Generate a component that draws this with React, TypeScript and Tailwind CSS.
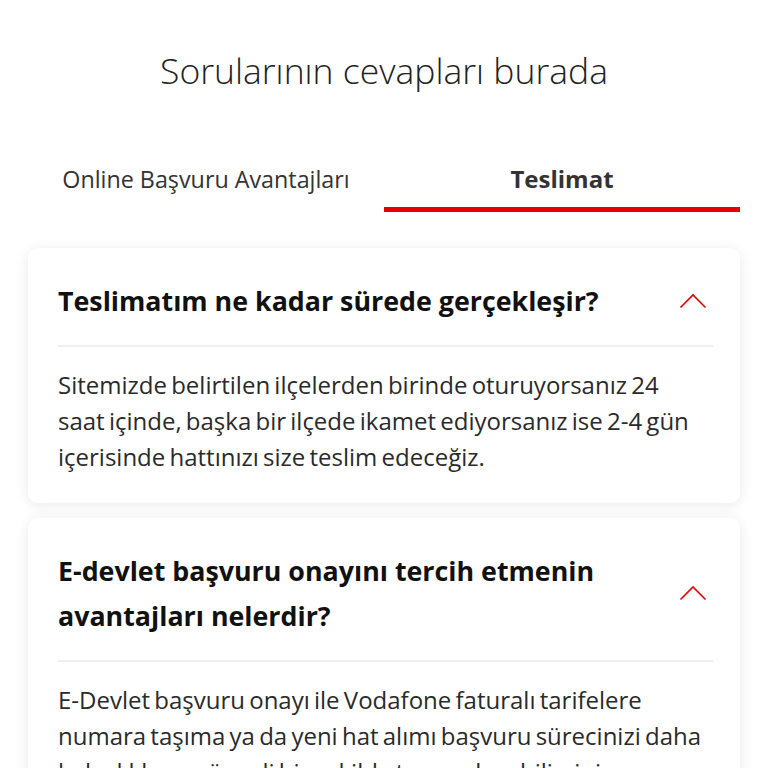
import React, { useState } from "react";

type Faq = { id: string; question: string; answer: string };

const tabs = ["Online Başvuru Avantajları", "Teslimat"];

const faqs: Faq[] = [
  {
    id: "sure",
    question: "Teslimatım ne kadar sürede gerçekleşir?",
    answer:
      "Sitemizde belirtilen ilçelerden birinde oturuyorsanız 24 saat içinde, başka bir ilçede ikamet ediyorsanız ise 2-4 gün içerisinde hattınızı size teslim edeceğiz.",
  },
  {
    id: "edevlet",
    question: "E-devlet başvuru onayını tercih etmenin avantajları nelerdir?",
    answer:
      "E-Devlet başvuru onayı ile Vodafone faturalı tarifelere numara taşıma ya da yeni hat alımı başvuru sürecinizi daha kolaylıkla ve güvenli bir şekilde tamamlayabilirsiniz.",
  },
];

const ChevronUp = () => (
  <svg width="28" height="16" viewBox="0 0 28 16" fill="none" className="shrink-0">
    <path d="M1.5 14.5 L14 2 L26.5 14.5" stroke="#e60000" strokeWidth="1.6" />
  </svg>
);

const FaqCard: React.FC<{ item: Faq }> = ({ item }) => (
  <div className="rounded-[10px] bg-white pl-[30px] pr-[27px] shadow-[0_2px_14px_rgba(0,0,0,0.09)]">
    <div className="flex items-center justify-between pt-[30px] pb-[22px]">
      <h3 className="max-w-[590px] text-[26.8px] font-bold leading-[45px] text-[#111]">
        {item.question}
      </h3>
      <div className="mr-[6px]">
        <ChevronUp />
      </div>
    </div>
    <div className="h-[2px] bg-[#f0f0f0]" />
    <p className="pt-[20px] pr-[6px] pb-[28px] text-[24px] leading-[36px] [word-spacing:-2px] text-[#2a2a2a]">
      {item.answer}
    </p>
  </div>
);

export default function App() {
  const [active, setActive] = useState(1);

  return (
    <div className="min-h-screen bg-white font-['Open_Sans',sans-serif]">
      <h1 className="pt-[46px] text-center text-[35.5px] font-light leading-[48px] text-[#222]">
        Sorularının cevapları burada
      </h1>

      <div className="mt-[56px] flex px-[28px]">
        {tabs.map((tab, i) => (
          <button
            key={tab}
            onClick={() => setActive(i)}
            className={
              i === active
                ? "flex-1 border-b-[5px] border-[#e60000] pt-[13px] pb-[12px] text-[24px] font-bold leading-[32px] text-[#333]"
                : "flex-1 border-b-[5px] border-transparent pt-[13px] pb-[12px] text-[23.3px] font-normal leading-[32px] text-[#333]"
            }
          >
            {tab}
          </button>
        ))}
      </div>

      <div className="mt-[36px] flex flex-col gap-[15px] px-[28px] pb-[30px]">
        {faqs.map((f) => (
          <FaqCard key={f.id} item={f} />
        ))}
      </div>
    </div>
  );
}
